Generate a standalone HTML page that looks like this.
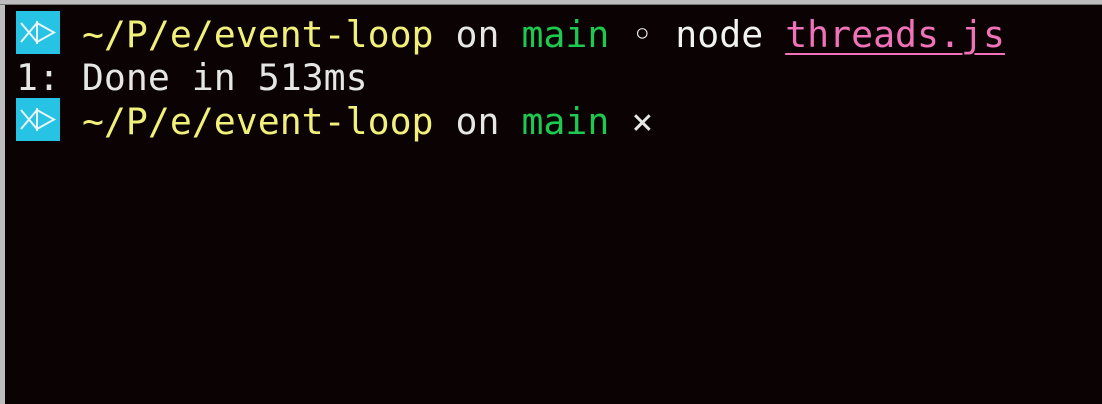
<!DOCTYPE html>
<html><head><meta charset="utf-8"><style>
html,body{margin:0;padding:0;width:1102px;height:404px;overflow:hidden;background:#bdbdbd;}
.term{position:absolute;left:5px;top:5px;width:1097px;height:399px;background:#0a0203;}
.edge{position:absolute;left:0;top:4px;width:1102px;height:1px;background:#7a7a7a;}
.l{position:absolute;left:16px;height:43px;line-height:43px;font-family:"DejaVu Sans Mono","Liberation Mono",monospace;font-size:36.5px;white-space:pre;color:#e6e6e6;}
.y{color:#f1f07a}.g{color:#1dc94f}.w{color:#f2f2f2}.p{color:#f172b9;text-decoration:underline;text-underline-offset:6px;text-decoration-thickness:2px}
.ic{position:absolute;left:16px;width:44px;height:43px;background:#27c3e4;}
</style></head><body>
<div class="edge"></div>
<div class="term"></div>
<div class="ic" style="top:11px"><svg width="44" height="43"><path d="M5 12 L21 31 M21 12 L5 31 M21 10 V33 M21 12 L38 21.5 L21 31" stroke="#e8f4f8" stroke-width="2" fill="none"/></svg></div>
<div class="l" style="top:13px">   <span class="y">~/P/e/event-loop</span> on <span class="g">main</span> <span class="w">◦ node</span> <span class="p">threads.js</span></div>
<div class="l" style="top:56px">1: Done in 513ms</div>
<div class="ic" style="top:98px"><svg width="44" height="43"><path d="M5 12 L21 31 M21 12 L5 31 M21 10 V33 M21 12 L38 21.5 L21 31" stroke="#e8f4f8" stroke-width="2" fill="none"/></svg></div>
<div class="l" style="top:100px">   <span class="y">~/P/e/event-loop</span> on <span class="g">main</span> ×</div>
</body></html>
